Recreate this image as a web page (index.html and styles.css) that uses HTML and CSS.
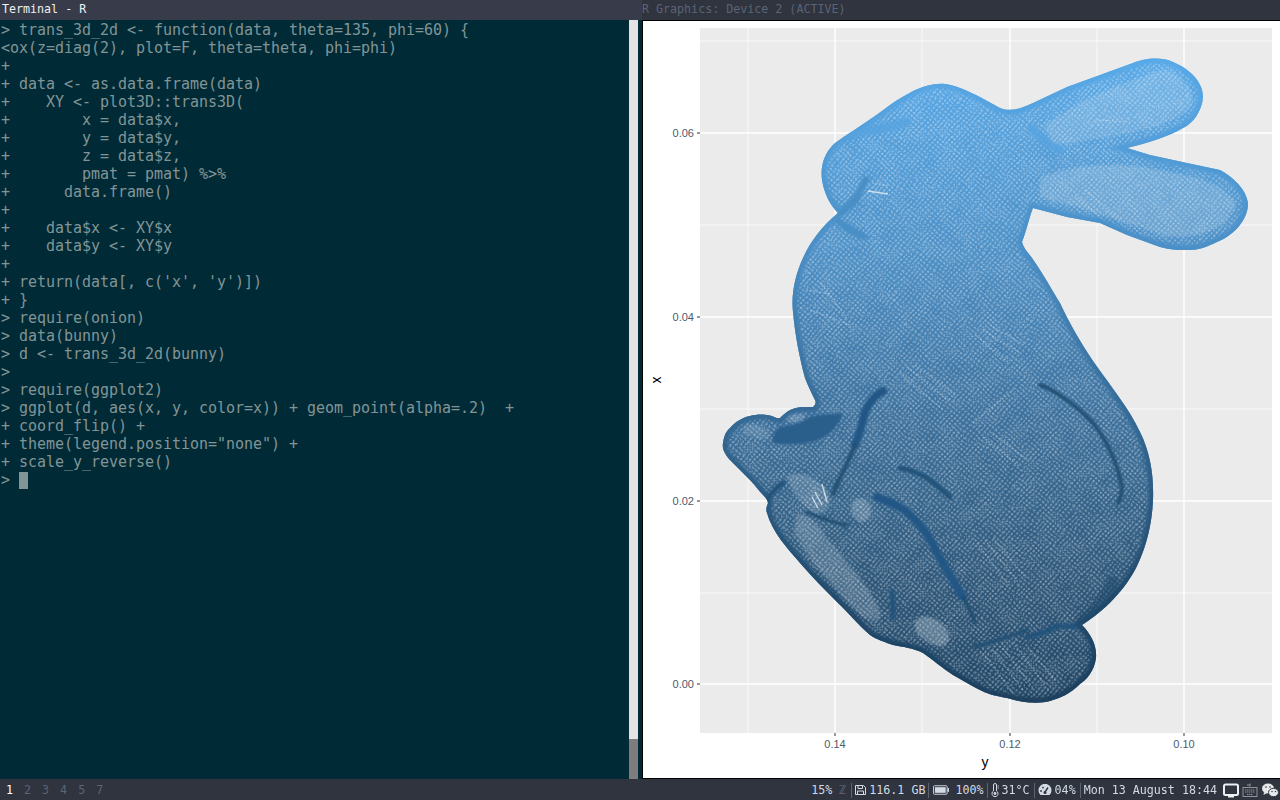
FILE: index.html
```html
<!DOCTYPE html>
<html>
<head>
    <title>Terminal - R</title>
    <link rel="stylesheet" href="styles.css">
</head>
<body>

<div class="desktop">
    <div class="columns">
        <div class="termColumn">
            <div class="titleBar titleActive">Terminal - R</div>
            <div class="termBody">
<pre class="termText">&gt; trans_3d_2d &lt;- function(data, theta=135, phi=60) {
&lt;ox(z=diag(2), plot=F, theta=theta, phi=phi)
+
+ data &lt;- as.data.frame(data)
+    XY &lt;- plot3D::trans3D(
+        x = data$x,
+        y = data$y,
+        z = data$z,
+        pmat = pmat) %&gt;%
+      data.frame()
+
+    data$x &lt;- XY$x
+    data$y &lt;- XY$y
+
+ return(data[, c('x', 'y')])
+ }
&gt; require(onion)
&gt; data(bunny)
&gt; d &lt;- trans_3d_2d(bunny)
&gt;
&gt; require(ggplot2)
&gt; ggplot(d, aes(x, y, color=x)) + geom_point(alpha=.2)  +
+ coord_flip() +
+ theme(legend.position="none") +
+ scale_y_reverse()
&gt; <span class="cursor"></span></pre>
                <div class="scrollBar"><div class="scrollThumb"></div></div>
            </div>
        </div>

        <div class="plotColumn">
            <div class="titleBar titleIdle">R Graphics: Device 2 (ACTIVE)</div>
            <div class="plotWindow">
                <svg class="plotSvg" viewBox="643 21 637 757" width="637" height="757">
                    <defs>
                        <linearGradient id="bunnyFill" gradientUnits="userSpaceOnUse" x1="0" y1="58" x2="0" y2="704">
                            <stop offset="0" stop-color="#58a9e8"/>
                            <stop offset="0.3" stop-color="#4b8fc6"/>
                            <stop offset="0.55" stop-color="#3a6f9c"/>
                            <stop offset="0.8" stop-color="#2c5679"/>
                            <stop offset="1" stop-color="#1f4464"/>
                        </linearGradient>
                        <linearGradient id="bunnyEdge" gradientUnits="userSpaceOnUse" x1="0" y1="58" x2="0" y2="704">
                            <stop offset="0" stop-color="#58a9e8"/>
                            <stop offset="0.3" stop-color="#4a8ec5"/>
                            <stop offset="0.55" stop-color="#346a96"/>
                            <stop offset="0.8" stop-color="#244d70"/>
                            <stop offset="1" stop-color="#1a3e5c"/>
                        </linearGradient>
                        <pattern id="dots" width="4" height="4" patternUnits="userSpaceOnUse" patternTransform="rotate(38)">
                            <circle cx="2" cy="2" r="1.2" fill="#fff" fill-opacity="0.3"/>
                        </pattern>
                        <pattern id="dotsFine" width="3.4" height="3.4" patternUnits="userSpaceOnUse" patternTransform="rotate(45)">
                            <circle cx="1.7" cy="1.7" r="1" fill="#fff" fill-opacity="0.2"/>
                        </pattern>
                        <pattern id="dotsPale" width="3.4" height="3.4" patternUnits="userSpaceOnUse" patternTransform="rotate(45)">
                            <circle cx="1.7" cy="1.7" r="1.25" fill="#dfe7ee" fill-opacity="0.8"/>
                        </pattern>
                        <filter id="mottle" x="0" y="0" width="100%" height="100%" color-interpolation-filters="sRGB">
                            <feTurbulence type="fractalNoise" baseFrequency="0.05" numOctaves="2" seed="7" result="n"/>
                            <feColorMatrix in="n" type="matrix" values="0 0 0 0 1  0 0 0 0 1  0 0 0 0 1  2.5 0 0 0 -0.6" result="m"/>
                            <feComposite in="SourceGraphic" in2="m" operator="in"/>
                        </filter>
                        <filter id="warp" x="0" y="0" width="100%" height="100%">
                            <feTurbulence type="fractalNoise" baseFrequency="0.06" numOctaves="2" seed="3" result="w"/>
                            <feDisplacementMap in="SourceGraphic" in2="w" scale="4" xChannelSelector="R" yChannelSelector="G"/>
                        </filter>
                        <filter id="blur1" x="-20%" y="-20%" width="140%" height="140%"><feGaussianBlur stdDeviation="0.8"/></filter>
                        <filter id="blur2" x="-20%" y="-20%" width="140%" height="140%"><feGaussianBlur stdDeviation="1.6"/></filter>
                        <path id="bunnyPath" d="M945 84 C962 86 985 100 1000 108 C1010 112 1020 109 1033 103 L1067 87 L1100 75 L1133 63 C1143 59 1160 56 1173 62 C1190 69 1203 82 1203 97 C1202 112 1192 124 1183 128 C1170 136 1145 144 1127 148 L1150 155 L1187 163 L1220 170 C1235 178 1248 192 1248 205 C1247 222 1232 236 1217 242 C1207 247 1198 250 1190 250 C1180 250 1170 250 1160 247 L1127 235 L1100 223 L1067 217 L1033 208 C1030 215 1026 232 1022 242 C1024 250 1030 254 1034 261 C1042 272 1052 290 1060 303 C1070 325 1085 350 1098 368 C1110 385 1130 410 1140 432 C1150 452 1154 475 1153 500 C1152 525 1146 548 1136 568 C1122 595 1098 615 1082 625 C1092 635 1097 647 1096 658 C1094 672 1086 680 1080 684 C1070 694 1060 698 1050 701 C1040 704 1022 703 1007 698 C995 696 985 693 980 690 C970 685 962 680 953 675 C942 668 932 659 923 653 C913 648 903 647 893 645 C885 642 877 640 870 635 C858 625 848 612 837 602 C825 590 812 577 800 563 C788 549 772 532 767 513 C765 508 768 504 768 503 C767 499 765 497 763 495 C758 490 755 485 750 480 L730 460 C724 453 722 448 723 443 C724 436 726 431 730 428 C735 422 743 417 750 416 C757 414 765 414 772 416 C775 417 777 419 780 418 C783 415 786 412 790 410 C798 406 806 407 813 407 C816 404 816 402 815 400 C812 394 808 386 805 378 C800 360 795 335 793 312 C791 295 795 275 803 258 C810 242 822 226 838 213 C830 205 824 193 822 180 C820 165 825 152 835 143 C850 132 868 122 890 105 C905 95 925 82 945 84 Z"/>
                        <clipPath id="bunnyClip"><use href="#bunnyPath"/></clipPath>
                    </defs>

                    <rect class="panel" x="700" y="28" width="572" height="705"/>
                    <g class="gridMinor">
                        <path d="M700 41H1272M700 225H1272M700 409H1272M700 593H1272M748 28V733M922 28V733M1097 28V733"/>
                    </g>
                    <g class="gridMajor">
                        <path d="M700 133H1272M700 317H1272M700 501H1272M700 684H1272M835 28V733M1010 28V733M1184 28V733"/>
                    </g>

                    <g class="ticks">
                        <path d="M697 133H700M697 317H700M697 501H700M697 684H700M835 733V736M1010 733V736M1184 733V736"/>
                    </g>
                    <g class="tickLabels">
                        <text x="694" y="137" text-anchor="end">0.06</text>
                        <text x="694" y="321" text-anchor="end">0.04</text>
                        <text x="694" y="505" text-anchor="end">0.02</text>
                        <text x="694" y="688" text-anchor="end">0.00</text>
                        <text x="835" y="748" text-anchor="middle">0.14</text>
                        <text x="1010" y="748" text-anchor="middle">0.12</text>
                        <text x="1184" y="748" text-anchor="middle">0.10</text>
                    </g>
                    <text class="axisTitle" x="985" y="767" text-anchor="middle">y</text>
                    <text class="axisTitle" transform="rotate(-90 661 380)" x="661" y="380" text-anchor="middle">x</text>

                    <!-- the bunny: gradient body, warped point grid, then creases and pale patches -->
                    <g clip-path="url(#bunnyClip)">
                        <rect x="700" y="50" width="572" height="660" fill="url(#bunnyFill)"/>
                        <g filter="url(#warp)">
                            <rect x="700" y="50" width="572" height="660" fill="url(#dots)"/>
                        </g>
                        <g filter="url(#mottle)">
                            <rect x="700" y="50" width="572" height="660" fill="url(#dotsFine)"/>
                        </g>

                        <g class="paleDots" filter="url(#blur1)">
                            <path class="p5" d="M1045 125 C1080 100 1130 78 1165 70 C1185 76 1195 90 1192 105 C1180 122 1140 132 1100 138 L1052 146 Z"/>
                            <path class="p6" d="M1040 178 C1080 160 1130 162 1180 174 C1215 180 1235 195 1236 207 C1225 230 1195 240 1165 236 C1120 220 1075 205 1040 198 Z"/>
                            <path class="p5" d="M795 516 C805 512 815 520 825 535 C840 555 865 580 880 610 C885 625 870 625 855 610 C835 590 810 560 795 535 Z"/>
                            <ellipse class="p8" cx="932" cy="631" rx="19" ry="12" transform="rotate(35 932 631)"/>
                            <ellipse class="p7" cx="861" cy="510" rx="10" ry="12"/>
                            <path class="p5" d="M787 476 C800 470 818 478 828 492 C832 505 828 515 815 514 C802 505 790 490 787 476 Z"/>
                            <ellipse class="p4" cx="757" cy="432" rx="14" ry="7" transform="rotate(20 757 432)"/>
                            <ellipse class="p5" cx="795" cy="417" rx="10" ry="5"/>
                        </g>

                        <g class="streaks">
                            <path d="M983 330L1020 353M990 325L1024 345M975 335L1008 362M900 373L943 410M908 368L950 402M915 365L955 395"/>
                            <path d="M973 423L1013 390M983 437L1020 467M990 432L1028 460M977 543L1010 587M985 540L1018 582M993 538L1026 578"/>
                            <path d="M820 282L847 318M810 310L850 325M806 290L830 294M872 183L888 186"/>
                            <path d="M983 653L1013 693M993 650L1023 690M1003 648L1033 688M1015 645L1045 685M1030 650L1055 680"/>
                            <path d="M1075 195L1110 225M1085 190L1122 222M1095 120L1130 122"/>
                        </g>
                        <g class="sparkle">
                            <path d="M815 492L822 505M822 484L827 502M812 497L818 508"/>
                            <path d="M868 191L888 194"/>
                        </g>

                        <use href="#bunnyPath" class="outline" filter="url(#blur2)"/>

                        <g class="crease" filter="url(#blur1)">
                            <path class="blob" d="M773 443 C772 434 776 430 780 427 C790 425 800 424 810 417 C820 414 832 414 843 413 C840 422 836 427 833 430 C825 438 818 441 810 442 C798 445 785 445 773 443 Z"/>
                            <path class="c7" d="M883 391 C870 398 864 412 863 420 C860 432 857 440 855 445"/>
                            <path class="c4" d="M855 445 C850 458 845 468 842 474 C838 482 835 488 833 494"/>
                            <path class="c5" d="M767 500 C771 493 776 488 783 483"/>
                            <path class="c3" d="M807 512 C820 518 834 523 847 525"/>
                            <path class="c5" d="M900 468 C912 470 920 474 927 478 C935 484 943 490 950 497"/>
                            <path class="c7" d="M877 497 C890 502 900 506 907 512 C920 525 928 532 937 553 C947 570 955 584 963 597"/>
                            <path class="c3" d="M963 597 C968 606 972 614 975 622"/>
                            <path class="c5" d="M892 592 C893 600 893 610 893 618"/>
                            <path class="c4" d="M975 647 C992 642 1012 636 1027 630"/>
                            <path class="c5" d="M1028 637 C1040 634 1050 630 1057 626 C1065 626 1072 627 1082 625"/>
                            <path class="c7soft" d="M1082 622 C1095 612 1105 600 1113 582"/>
                            <path class="c4" d="M1040 385 C1050 388 1058 394 1067 400 C1078 408 1086 415 1093 423 C1102 434 1108 445 1113 457 C1118 468 1120 478 1122 487 C1122 495 1120 499 1118 503"/>
                            <path class="neck" d="M837 218 C848 222 860 230 870 238 L863 240 C852 236 842 230 835 222 Z"/>
                            <path class="neck" d="M837 218 C845 214 852 209 858 203 C862 195 866 186 870 178 L864 176 C860 186 852 198 845 204 C840 208 838 212 837 218 Z"/>
                            <path class="headBand" d="M850 136 C870 130 890 128 907 122"/>
                            <path class="headBand" d="M1032 128 C1040 138 1048 145 1060 150"/>
                        </g>
                    </g>
                </svg>
            </div>
        </div>
    </div>

    <div class="statusBar">
        <div class="workspaces">
            <span class="wsCurrent">1</span><span>2</span><span>3</span><span>4</span><span>5</span><span>7</span>
        </div>
        <div class="blocks">
            <span class="block blockTouch">15%<span class="blockIdle">ℤ</span></span>
            <span class="block blockDisk">
                <svg class="icon" viewBox="0 0 11 12" width="11" height="12"><path d="M0.5 1.5H8.5L10.5 3.5V10.5H0.5Z M3 1.5V4.5H7.5V1.5 M2.5 10.5V7H8.5V10.5" fill="none" stroke="#d3dae3" stroke-width="1"/></svg>116.1 GB
            </span>
            <span class="block blockBattery">
                <svg class="icon" viewBox="0 0 17 10" width="16" height="10"><rect x="0.5" y="0.5" width="14.5" height="9" rx="1" fill="none" stroke="#d3dae3"/><rect x="2" y="2" width="11.5" height="6" fill="#d3dae3"/><rect x="15.5" y="3" width="1.5" height="4" fill="#d3dae3"/></svg>100%
            </span>
            <span class="block blockTemp">
                <svg class="icon" viewBox="0 0 8 14" width="8" height="14"><path d="M2.5 8V2A1.5 1.5 0 0 1 5.5 2V8A3 3 0 1 1 2.5 8Z" fill="none" stroke="#d3dae3"/><circle cx="4" cy="10.5" r="1.4" fill="#d3dae3"/><path d="M6.5 3H8M6.5 5H8" stroke="#d3dae3" stroke-width="0.8"/></svg>31°C
            </span>
            <span class="block blockGauge">
                <svg class="icon" viewBox="0 0 14 12" width="14" height="12"><path d="M2.5 11A6.5 6.5 0 1 1 11.5 11Z" fill="#d3dae3"/><path d="M7 8L10 3.5" stroke="#2f343f" stroke-width="1.4"/><circle cx="7" cy="8.5" r="1.5" fill="#2f343f"/><circle cx="3" cy="7" r="0.9" fill="#2f343f"/><circle cx="5" cy="3.6" r="0.9" fill="#2f343f"/></svg>04%
            </span>
            <span class="block blockLast">Mon 13 August 18:44</span>
        </div>
        <div class="tray">
            <svg viewBox="0 0 16 15" width="16" height="15"><path d="M2.5 1.5H13.5A1.5 1.5 0 0 1 15 3V10.5A1.5 1.5 0 0 1 13.5 12H2.5A1.5 1.5 0 0 1 1 10.5V3A1.5 1.5 0 0 1 2.5 1.5Z" fill="none" stroke="#eef0f2" stroke-width="2"/><path d="M5 13.5H11" stroke="#eef0f2" stroke-width="2"/></svg>
            <svg viewBox="0 0 16 15" width="16" height="15"><path d="M8 0.5V3.5M5 2H8" stroke="#8f939a" fill="none"/><rect x="1" y="4.5" width="14" height="9" fill="none" stroke="#8f939a"/><path d="M3 7H13M3 9H13M5 11.5H11" stroke="#8f939a" stroke-dasharray="1.4 .6"/></svg>
            <svg viewBox="0 0 18 15" width="18" height="15"><ellipse cx="7" cy="5.5" rx="6" ry="5" fill="#e6e8ea"/><ellipse cx="12.5" cy="9.5" rx="5" ry="4.2" fill="#e6e8ea" stroke="#2f343f"/><path d="M3 9L2.5 12L6 10Z" fill="#e6e8ea"/><circle cx="5" cy="4" r="0.8" fill="#2f343f"/><circle cx="9" cy="4" r="0.8" fill="#2f343f"/><circle cx="11" cy="8.5" r="0.7" fill="#2f343f"/><circle cx="14.5" cy="8.5" r="0.7" fill="#2f343f"/></svg>
        </div>
    </div>
</div>

</body>
</html>
```

FILE: styles.css
```css
* {
    box-sizing: border-box;
}

html, body {
    margin: 0;
    padding: 0;
    background-color: #2f343f;
}

.desktop {
    display: flex;
    flex-direction: column;
    width: 1280px;
    height: 800px;
    overflow: hidden;
    font-family: "DejaVu Sans Mono", monospace;
}

.columns {
    display: flex;
    height: 779px;
}

.titleBar {
    height: 20px;
    line-height: 18px;
    font-size: 11.67px;
    white-space: pre;
}

.titleActive {
    padding-left: 2px;
    color: #eef0f3;
    background-color: #383c4a;
}

.titleIdle {
    color: #5c6374;
    background-color: #2f343f;
}

.termColumn {
    width: 642px;
    flex: none;
}

.termBody {
    display: flex;
    height: 759px;
    background-color: #002b36;
}

.termText {
    flex: 1;
    margin: 0;
    padding: 1px 0 0 1px;
    font-family: "DejaVu Sans Mono", monospace;
    font-size: 15px;
    letter-spacing: -0.03px;
    line-height: 18px;
    color: #839496;
    overflow: hidden;
}

.cursor {
    display: inline-block;
    width: 9px;
    height: 17px;
    vertical-align: -4px;
    background-color: #839496;
}

.scrollBar {
    display: flex;
    align-items: flex-end;
    width: 9px;
    flex: none;
    margin-right: 4px;
    background-color: #e3e3e3;
}

.scrollThumb {
    width: 9px;
    height: 40px;
    background-color: #7d7d7d;
}

.plotColumn {
    flex: 1;
}

.plotWindow {
    height: 759px;
    background-color: #fff;
    border: 1px solid #000;
    border-right: 0;
}

.plotSvg {
    display: block;
}

.panel {
    fill: #ebebeb;
}

.gridMinor path {
    stroke: #fff;
    stroke-width: 0.7;
    fill: none;
}

.gridMajor path {
    stroke: #fff;
    stroke-width: 1.4;
    fill: none;
}

.ticks path {
    stroke: #333;
    stroke-width: 1;
    fill: none;
}

.tickLabels text {
    font-family: "Liberation Sans", sans-serif;
    font-size: 11px;
    fill: #4d5a6b;
}

.axisTitle {
    font-family: "Liberation Sans", sans-serif;
    font-size: 14px;
    fill: #000;
}

.paleDots path, .paleDots ellipse {
    fill: url(#dotsPale);
}

.paleDots .p4 { opacity: 0.4; }
.paleDots .p5 { opacity: 0.55; }
.paleDots .p6 { opacity: 0.6; }
.paleDots .p7 { opacity: 0.7; }
.paleDots .p8 { opacity: 0.85; }

.streaks path {
    fill: none;
    stroke: #e3ebf1;
    stroke-width: 1.2;
    stroke-dasharray: 2 1.4;
    opacity: 0.4;
}

.sparkle path {
    fill: none;
    stroke: #f0f4f7;
    stroke-width: 1.4;
    opacity: 0.75;
}

.outline {
    fill: none;
    stroke: url(#bunnyEdge);
    stroke-width: 10;
}

.crease path {
    fill: none;
    stroke-linecap: round;
}

.crease .blob { fill: #295f8c; }
.crease .c3 { stroke-width: 3; stroke: #1f4a6c; }
.crease .c4 { stroke-width: 4; stroke: #235073; }
.crease .c5 { stroke-width: 5; stroke: #22527a; }
.crease .c7 { stroke-width: 8; stroke: #235785; }
.crease .c7soft { stroke-width: 12; stroke: #20476a; opacity: 0.6; }
.crease .neck { fill: #4a8fc6; }
.crease .headBand { stroke-width: 9; stroke: #55a3de; opacity: 0.8; }

.statusBar {
    display: flex;
    align-items: center;
    height: 21px;
    padding-top: 1px;
    background-color: #2f343f;
    font-size: 11.67px;
    color: #d3dae3;
}

.workspaces {
    display: flex;
    flex: 1;
    gap: 11px;
    padding-left: 6px;
    color: #5c6374;
}

.wsCurrent {
    color: #fff;
}

.blocks {
    display: flex;
    align-items: center;
}

.block {
    display: flex;
    align-items: center;
    gap: 3px;
    height: 15px;
    padding: 0 3px;
    border-right: 1px solid #5c6374;
}

.blockTouch {
    gap: 0;
    padding-right: 5px;
}

.blockBattery {
    gap: 6px;
    padding-left: 4px;
}

.blockTemp, .blockGauge {
    padding-right: 4px;
}

.blockIdle {
    margin-left: 7px;
    color: #6b7280;
}

.blockLast {
    border-right: 0;
    padding-right: 0;
}

.icon {
    flex: none;
}

.tray {
    display: flex;
    align-items: center;
    gap: 3px;
    padding: 0 1px 0 6px;
}
```
